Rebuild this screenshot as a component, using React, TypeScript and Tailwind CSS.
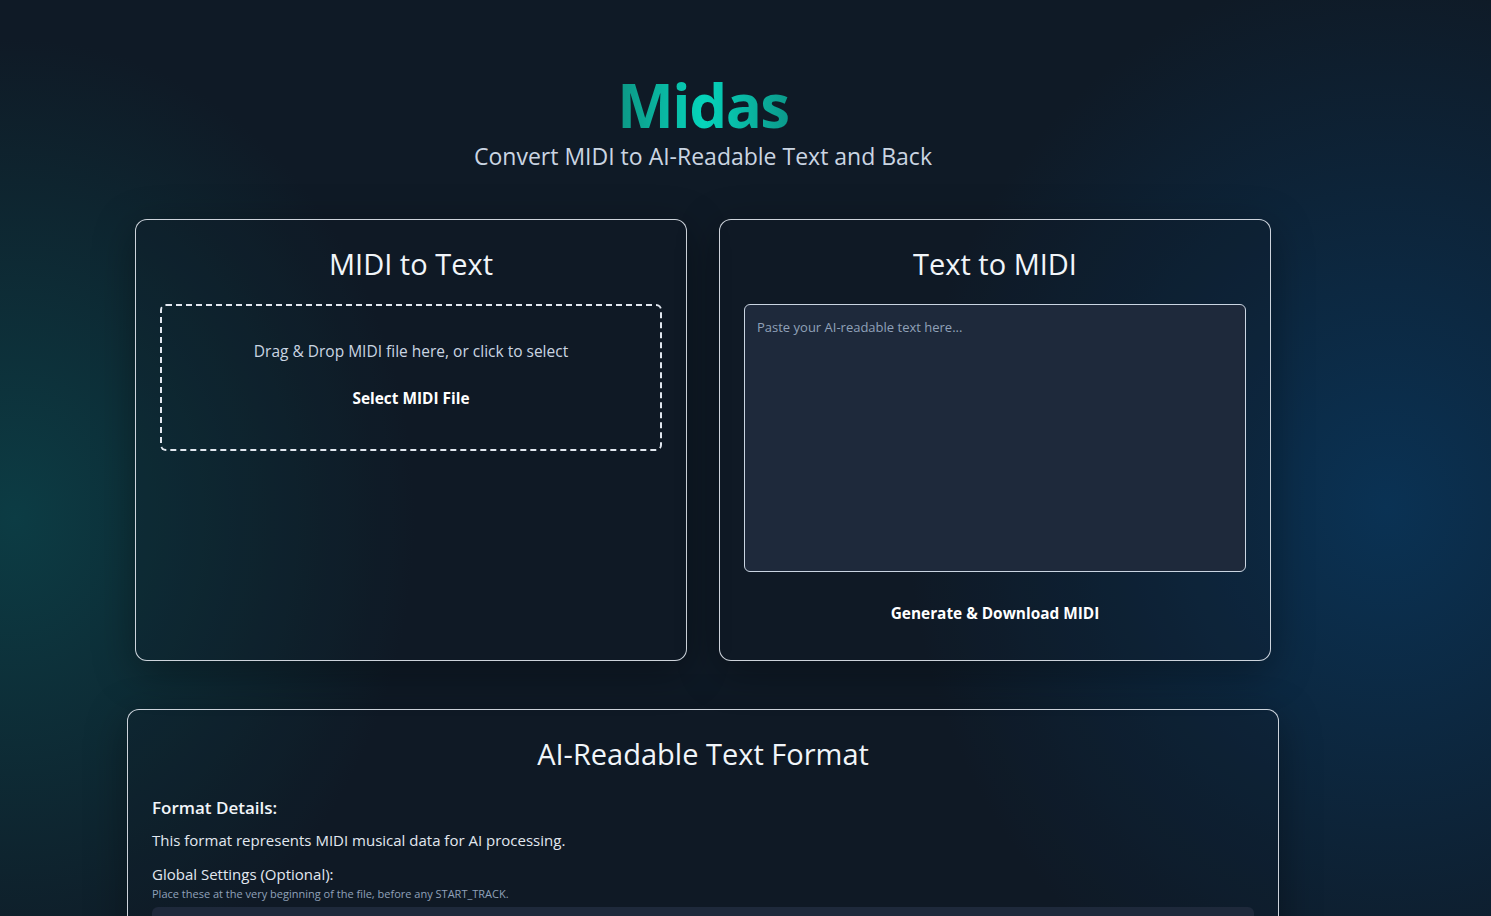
import { useState } from "react";

const font = { fontFamily: '"Open Sans", "Noto Sans", sans-serif' };

function Card({ title, children, className = "" }: { title: string; children: React.ReactNode; className?: string }) {
    return (
        <section className={`rounded-xl border border-slate-200/90 bg-[#0e1724]/25 px-6 pt-6 pb-[26px] shadow-[0_10px_40px_rgba(0,0,0,0.35)] flex flex-col ${className}`}>
            <h2 className="text-center text-[29px] leading-10 font-medium text-slate-100 mb-5">{title}</h2>
            {children}
        </section>
    );
}

export default function App() {
    const [text, setText] = useState("");

    return (
        <div
            style={font}
            className="min-h-screen bg-[#0f1a26] bg-[radial-gradient(ellipse_400px_480px_at_1%_48%,rgba(12,60,68,1),transparent),radial-gradient(ellipse_480px_540px_at_93%_47%,rgba(10,50,84,1),transparent)] text-slate-100 pl-[127px] pt-[72px] pb-16"
        >
            <div className="w-[1152px]">
                <header className="text-center">
                    <h1 className="text-[60px] leading-[66px] font-bold tracking-tight bg-gradient-to-r from-[#0c9684] via-[#05d4bb] to-[#0b9a8b] bg-clip-text text-transparent inline-block">
                        Midas
                    </h1>
                    <p className="text-[23px] leading-8 text-slate-300 mt-0.5">Convert MIDI to AI-Readable Text and Back</p>
                </header>

                <div className="grid grid-cols-2 gap-8 px-2 mt-[47px]">
                    <Card title="MIDI to Text">
                        <div className="rounded-md border-2 border-dashed border-slate-200 px-8 pt-[33px] pb-[30px] flex flex-col items-center">
                            <p className="text-[15.5px] leading-6 text-slate-300">Drag &amp; Drop MIDI file here, or click to select</p>
                            <button className="mt-4 px-4 py-2 text-[15.4px] leading-6 font-bold text-white">Select MIDI File</button>
                        </div>
                    </Card>

                    <Card title="Text to MIDI">
                        <textarea
                            value={text}
                            onChange={(e) => setText(e.target.value)}
                            placeholder="Paste your AI-readable text here..."
                            className="h-[268px] resize-none rounded-md border border-slate-300 bg-[#1e293b] px-3 py-3 text-[13px] leading-5 text-slate-200 placeholder:text-slate-400 outline-none"
                        />
                        <button className="mt-[22px] mx-auto px-4 py-2 text-[15.4px] leading-6 font-bold text-white">Generate &amp; Download MIDI</button>
                    </Card>
                </div>

                <section className="mt-12 rounded-xl border border-slate-200/90 bg-[#0e1724]/25 p-6 shadow-[0_10px_40px_rgba(0,0,0,0.35)]">
                    <h2 className="text-center text-[29px] leading-10 font-medium text-slate-100">AI-Readable Text Format</h2>
                    <h3 className="mt-5 text-[17px] leading-7 font-semibold text-slate-100">Format Details:</h3>
                    <p className="mt-[6px] text-[15px] leading-6 text-slate-200">This format represents MIDI musical data for AI processing.</p>
                    <h4 className="mt-[10px] text-[15px] leading-6 text-slate-200">Global Settings (Optional):</h4>
                    <p className="text-[11px] leading-4 text-slate-400">Place these at the very beginning of the file, before any START_TRACK.</p>
                    <pre className="mt-[5px] rounded-md bg-[#1e293b] px-4 py-3 text-[13px] leading-5 text-slate-200" style={{ fontFamily: '"Liberation Mono", monospace' }}>
{`TEMPO: 120
TIME_SIGNATURE: 4/4
TICKS_PER_BEAT: 480`}
                    </pre>
                </section>
            </div>
        </div>
    );
}
